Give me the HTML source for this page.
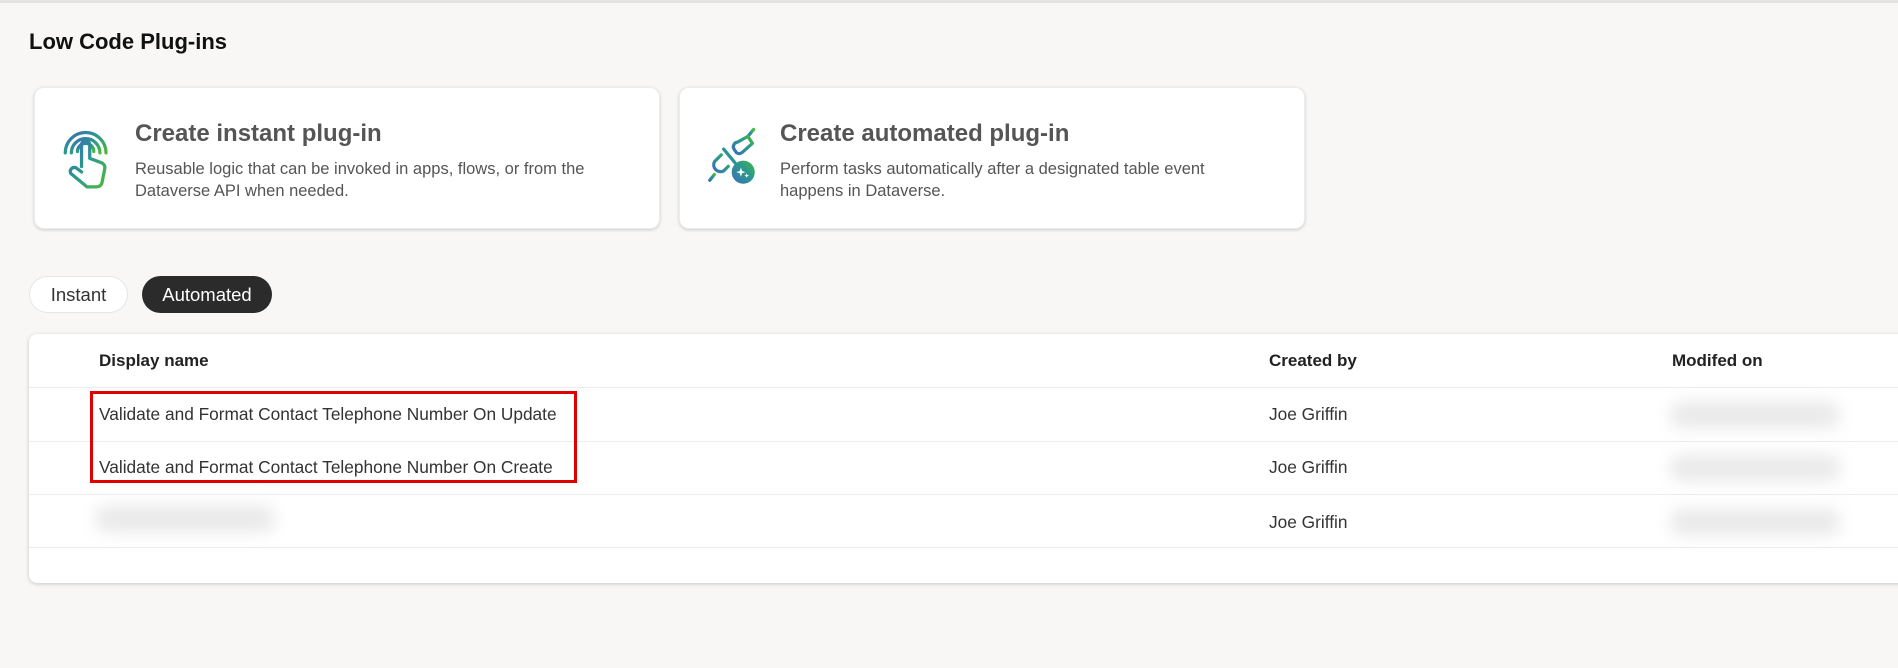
<!DOCTYPE html>
<html><head><meta charset="utf-8"><style>
*{box-sizing:border-box;margin:0;padding:0}
body{width:1898px;height:668px;overflow:hidden;background:#f8f7f6;font-family:"Segoe UI","Liberation Sans",sans-serif;color:#242424;position:relative}
.topline{position:absolute;left:0;top:0;width:1898px;height:3px;background:#e3e3e3}
h1{position:absolute;left:29px;top:29px;font-size:22px;font-weight:600;color:#111;white-space:nowrap}
.card{position:absolute;top:87px;height:142px;background:#fff;border-radius:10px;box-shadow:0 1px 3px rgba(0,0,0,.18);border:1px solid #ececec}
.t{position:absolute;top:32px;font-size:24px;font-weight:600;color:#555;white-space:nowrap}
.d{position:absolute;top:70px;font-size:16.5px;color:#555;line-height:22px;white-space:nowrap}
.pill{position:absolute;top:276px;height:37px;border-radius:19px;font-size:18.5px;display:flex;align-items:center;justify-content:center}
.table{position:absolute;left:29px;top:334px;width:1880px;height:249px;background:#fff;border-radius:8px;box-shadow:0 1px 4px rgba(0,0,0,.2)}
.hl{position:absolute;left:29px;width:1869px;height:1px;background:#ececec}
.tx{position:absolute;font-size:17.3px;color:#333;white-space:nowrap;line-height:22px}
.hd{font-weight:600;color:#222;font-size:17px}
.blur{position:absolute;background:#e9e9e9;filter:blur(8px);border-radius:12px}
</style></head><body>
<div class="topline"></div>
<h1>Low Code Plug-ins</h1>

<div class="card" style="left:34px;width:626px">
 <svg style="position:absolute;left:27px;top:35px" width="50" height="68" viewBox="0 0 36 50">
  <defs><linearGradient id="g1" x1="0" y1="0" x2="1" y2="1"><stop offset="0" stop-color="#3b6fb6"/><stop offset=".5" stop-color="#2a9a8c"/><stop offset="1" stop-color="#4cba3a"/></linearGradient></defs>
  <g fill="none" stroke="url(#g1)" stroke-width="2.4" stroke-linecap="round" stroke-linejoin="round">
   <path d="M2 22 A15 15 0 1 1 32 22"/>
   <path d="M6.5 22 A10.5 10.5 0 1 1 27.5 22"/>
   <path d="M11 21 A6 6 0 1 1 23 21"/>
   <path d="M14 32 V16 a3 3 0 0 1 6 0 V26 l8 3 a4 4 0 0 1 3 5 l-2 10 a4 4 0 0 1 -4 3 H18 l-12 -10 a3 3 0 0 1 4 -4 l4 3"/>
  </g>
 </svg>
 <div class="t" style="left:100px">Create instant plug-in</div>
 <div class="d" style="left:100px">Reusable logic that can be invoked in apps, flows, or from the<br>Dataverse API when needed.</div>
</div>

<div class="card" style="left:679px;width:626px">
 <svg style="position:absolute;left:27px;top:38px" width="54" height="60" viewBox="0 0 46 52">
  <defs><linearGradient id="g2" x1="0" y1="1" x2="1" y2="0"><stop offset="0" stop-color="#3b6fb6"/><stop offset=".6" stop-color="#2a9a8c"/><stop offset="1" stop-color="#4cba3a"/></linearGradient></defs>
  <g fill="none" stroke="url(#g2)" stroke-width="2.8" stroke-linecap="round" stroke-linejoin="round">
   <path d="M40 3 l-5 6"/><path d="M26 14 l9 -5 l4 6 l-9 8 a4 4 0 0 1 -5 0 l-2 -3 a4 4 0 0 1 3 -6 z"/>
   <path d="M14 20 l10 12"/><path d="M12 25 l-6 6 a6 6 0 0 0 8 8 l4 -4"/><path d="M6 42 l-4 5"/>
  </g>
  <circle cx="31" cy="40" r="10" fill="url(#g2)"/>
  <path d="M29 36 l1 3 3 1 -3 1 -1 3 -1-3 -3-1 3-1z M34 41 l.6 1.4 1.4.6 -1.4.6 -.6 1.4 -.6-1.4 -1.4-.6 1.4-.6z" fill="#fff"/>
 </svg>
 <div class="t" style="left:100px">Create automated plug-in</div>
 <div class="d" style="left:100px">Perform tasks automatically after a designated table event<br>happens in Dataverse.</div>
</div>

<div class="pill" style="left:29px;width:99px;background:#fff;border:1px solid #e6e6e6;color:#333">Instant</div>
<div class="pill" style="left:142px;width:130px;background:#2b2b2b;color:#fff">Automated</div>

<div class="table"></div>
<div class="tx hd" style="left:99px;top:350px">Display name</div>
<div class="tx hd" style="left:1269px;top:350px">Created by</div>
<div class="tx hd" style="left:1672px;top:350px">Modifed on</div>
<div class="hl" style="top:387px"></div>
<div class="hl" style="top:441px"></div>
<div class="hl" style="top:494px"></div>
<div class="hl" style="top:547px"></div>
<div class="tx" style="left:99px;top:403px">Validate and Format Contact Telephone Number On Update</div>
<div class="tx" style="left:99px;top:456px">Validate and Format Contact Telephone Number On Create</div>
<div class="tx" style="left:1269px;top:403px">Joe Griffin</div>
<div class="tx" style="left:1269px;top:456px">Joe Griffin</div>
<div class="tx" style="left:1269px;top:511px">Joe Griffin</div>
<div style="position:absolute;left:90px;top:391px;width:487px;height:92px;border:3px solid #e00000"></div>
<div class="blur" style="left:95px;top:506px;width:180px;height:26px"></div>
<div class="blur" style="left:1670px;top:402px;width:170px;height:26px"></div>
<div class="blur" style="left:1670px;top:455px;width:170px;height:26px"></div>
<div class="blur" style="left:1670px;top:509px;width:170px;height:26px"></div>
</body></html>
